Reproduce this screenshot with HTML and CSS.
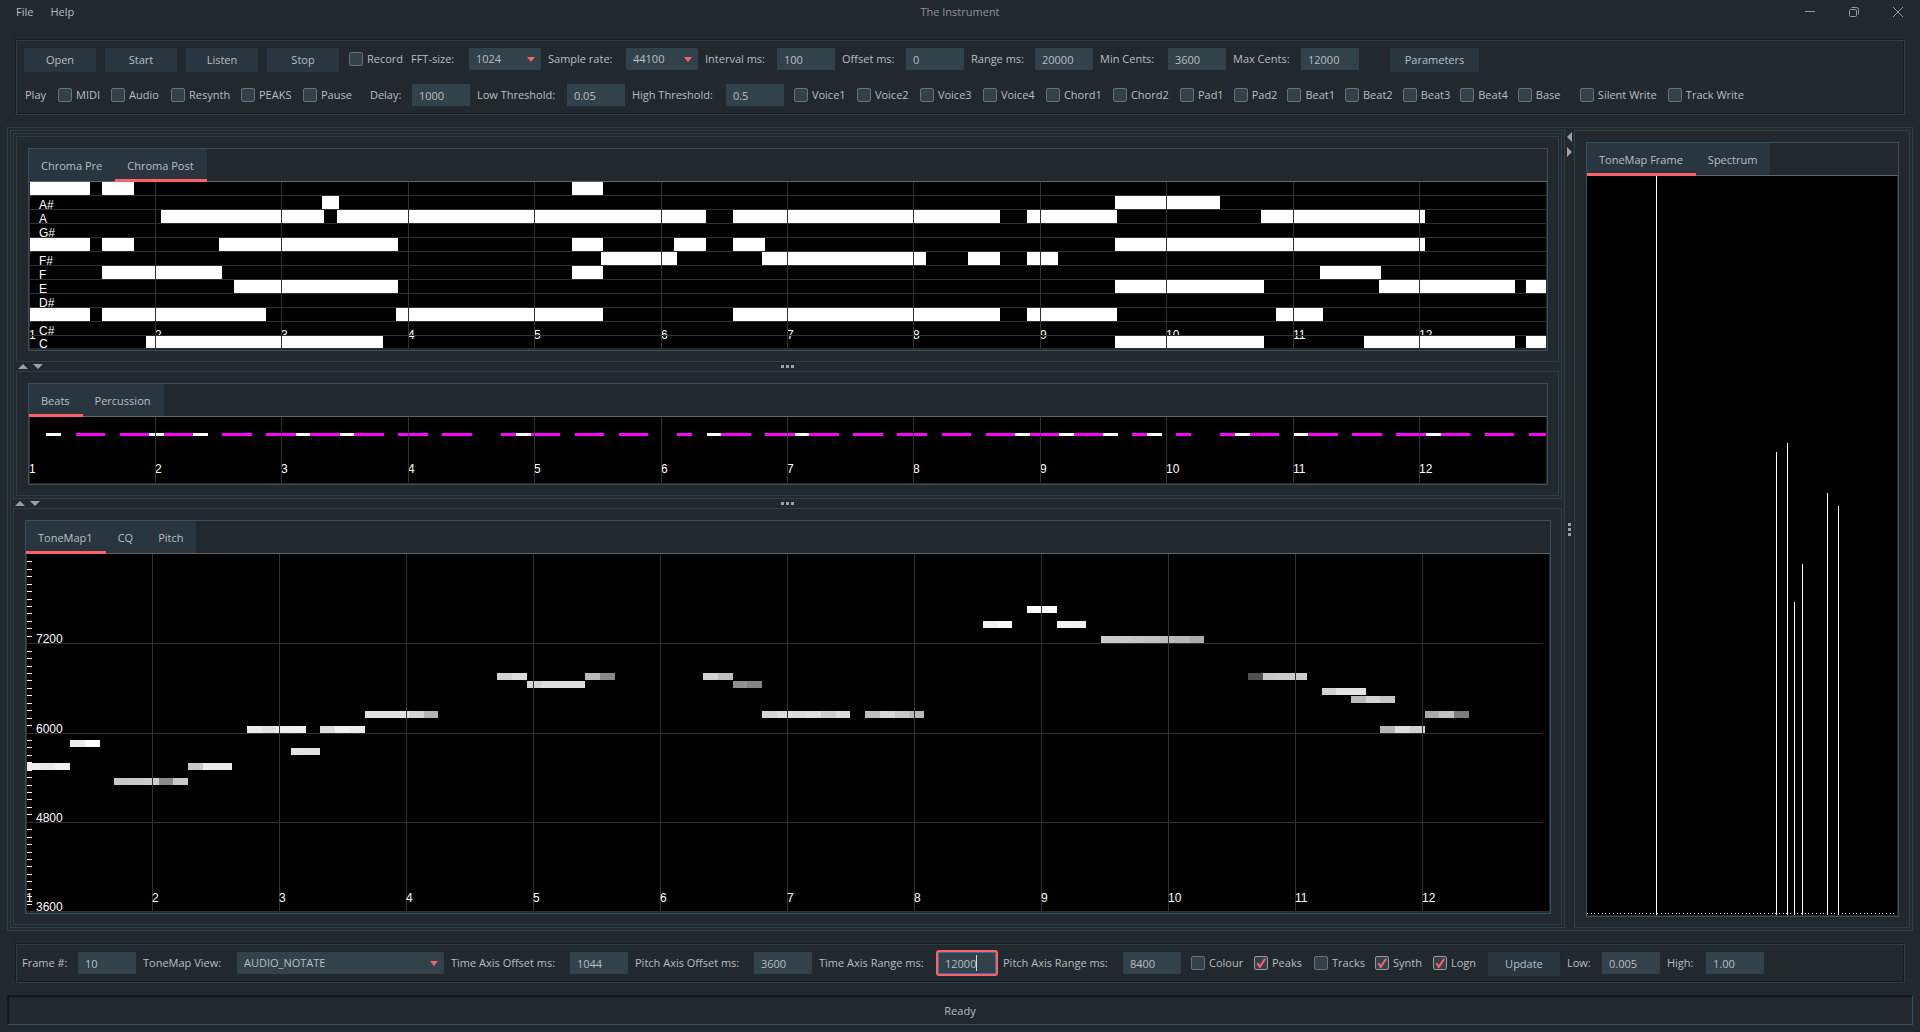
FILE: index.html
```html
<!DOCTYPE html>
<html lang="en">
<head>
<meta charset="utf-8">
<title>The Instrument</title>
<link rel="stylesheet" href="styles.css">
</head>
<body>
<header class="titlebar">
  <nav class="menu"><button type="button">File</button><button type="button">Help</button></nav>
  <h1>The Instrument</h1>
  <div class="window-buttons">
    <button type="button" aria-label="Minimize"><svg width="12" height="12" viewBox="0 0 12 12"><path d="M1 5.5H11"/></svg></button>
    <button type="button" aria-label="Restore"><svg width="12" height="12" viewBox="0 0 12 12"><rect x="1.500" y="3.500" width="7" height="7" rx="1"/><path d="M3.500 1.500H8.500Q10.500 1.500 10.500 3.500V8.500"/></svg></button>
    <button type="button" aria-label="Close"><svg width="12" height="12" viewBox="0 0 12 12"><path d="M1 1L11 11M11 1L1 11"/></svg></button>
  </div>
</header>

<form class="toolbar etched">
  <div class="row">
    <button class="btn" type="button">Open</button>
    <button class="btn" type="button">Start</button>
    <button class="btn" type="button">Listen</button>
    <button class="btn" type="button">Stop</button>
    <label class="check record"><input type="checkbox">Record</label>
    <label class="field w-130">FFT-size:<span class="select"><select><option>1024</option></select></span></label>
    <label class="field w-150">Sample rate:<span class="select"><select><option>44100</option></select></span></label>
    <label class="field w-130">Interval ms:<input type="text" value="100"></label>
    <label class="field w-122">Offset ms:<input type="text" value="0"></label>
    <label class="field w-122">Range ms:<input type="text" value="20000"></label>
    <label class="field w-126">Min Cents:<input type="text" value="3600"></label>
    <label class="field w-126">Max Cents:<input type="text" value="12000"></label>
    <button class="btn btn-params" type="button">Parameters</button>
  </div>
  <div class="row">
    <span class="caption">Play</span>
    <label class="check c-43"><input type="checkbox">MIDI</label>
    <label class="check c-50"><input type="checkbox">Audio</label>
    <label class="check c-60"><input type="checkbox">Resynth</label>
    <label class="check c-52"><input type="checkbox">PEAKS</label>
    <label class="check c-48"><input type="checkbox">Pause</label>
    <label class="field spaced w-100">Delay:<input type="text" value="1000"></label>
    <label class="field w-148">Low Threshold:<input type="text" value="0.05"></label>
    <label class="field w-152">High Threshold:<input type="text" value="0.5"></label>
    <label class="check c-53"><input type="checkbox">Voice1</label>
    <label class="check c-53"><input type="checkbox">Voice2</label>
    <label class="check c-53"><input type="checkbox">Voice3</label>
    <label class="check c-53"><input type="checkbox">Voice4</label>
    <label class="check c-57"><input type="checkbox">Chord1</label>
    <label class="check c-57"><input type="checkbox">Chord2</label>
    <label class="check c-43"><input type="checkbox">Pad1</label>
    <label class="check c-43"><input type="checkbox">Pad2</label>
    <label class="check c-47"><input type="checkbox">Beat1</label>
    <label class="check c-47"><input type="checkbox">Beat2</label>
    <label class="check c-47"><input type="checkbox">Beat3</label>
    <label class="check c-47"><input type="checkbox">Beat4</label>
    <label class="check c-43"><input type="checkbox">Base</label>
    <label class="check spaced c-78"><input type="checkbox">Silent Write</label>
    <label class="check c-78"><input type="checkbox">Track Write</label>
  </div>
</form>

<main class="frame split-h workspace">
  <div class="frame split-v left">
    <div class="frame split-v upper">
      <section class="frame pane chroma">
        <div class="tabpane">
          <div class="tabs" role="tablist">
            <button type="button" role="tab">Chroma Pre</button>
            <button type="button" role="tab" aria-selected="true">Chroma Post</button>
          </div>
          <div class="canvas"><svg id="chroma"></svg></div>
        </div>
      </section>
      <div class="divider horizontal"><i class="up"></i><i class="down"></i><b class="grip"></b></div>
      <section class="frame pane beats">
        <div class="tabpane">
          <div class="tabs" role="tablist">
            <button type="button" role="tab" aria-selected="true">Beats</button>
            <button type="button" role="tab">Percussion</button>
          </div>
          <div class="canvas"><svg id="beats"></svg></div>
        </div>
      </section>
    </div>
    <div class="divider horizontal"><i class="up"></i><i class="down"></i><b class="grip"></b></div>
    <section class="frame pane tonemap">
      <div class="tabpane">
        <div class="tabs" role="tablist">
          <button type="button" role="tab" aria-selected="true">ToneMap1</button>
          <button type="button" role="tab">CQ</button>
          <button type="button" role="tab">Pitch</button>
        </div>
        <div class="canvas"><svg id="tonemap"></svg></div>
      </div>
    </section>
  </div>
  <div class="divider vertical"><i class="back"></i><i class="forward"></i><b class="grip"></b></div>
  <section class="frame pane side">
    <div class="tabpane">
      <div class="tabs" role="tablist">
        <button type="button" role="tab" aria-selected="true">ToneMap Frame</button>
        <button type="button" role="tab">Spectrum</button>
      </div>
      <div class="canvas"><svg id="frame"></svg></div>
    </div>
  </section>
</main>

<form class="toolbar viewbar etched">
  <div class="row">
    <label class="field w-114">Frame #:<input type="text" value="10"></label>
    <label class="field w-301">ToneMap View:<span class="select wide"><select><option>AUDIO_NOTATE</option></select></span></label>
    <label class="field w-177">Time Axis Offset ms:<input type="text" value="1044"></label>
    <label class="field w-177">Pitch Axis Offset ms:<input type="text" value="3600"></label>
    <label class="field w-177">Time Axis Range ms:<span class="editing"><input type="text" value="12000"></span></label>
    <label class="field w-178">Pitch Axis Range ms:<input type="text" value="8400"></label>
    <label class="check c-53"><input type="checkbox">Colour</label>
    <label class="check c-50"><input type="checkbox" checked>Peaks</label>
    <label class="check c-50"><input type="checkbox">Tracks</label>
    <label class="check c-48"><input type="checkbox" checked>Synth</label>
    <label class="check c-47"><input type="checkbox" checked>Logn</label>
    <button class="btn btn-update" type="button">Update</button>
    <label class="field w-93">Low:<input type="text" value="0.005"></label>
    <label class="field w-97">High:<input type="text" value="1.00"></label>
  </div>
</form>

<footer class="status">Ready</footer>
<script src="charts.js"></script>
</body>
</html>
```
FILE: styles.css
```css
:root {
  --bg: #21292f;
  --line: #2f3e46;
  --pane-line: #38505c;
  --field: #31424b;
  --button: #293640;
  --text: #bbbebf;
  --accent: #ff6069;
  --shade: #151b1f;
}

* { box-sizing: border-box; }

body {
  margin: 0;
  min-height: 100vh;
  display: flex;
  flex-direction: column;
  background: var(--bg);
  color: var(--text);
  font: 11px/16px "Open Sans", "Noto Sans", sans-serif;
}

button, input, select { font: inherit; color: inherit; border: 0; margin: 0; padding: 0; border-radius: 0; outline: 0; }
button { background: none; }

.titlebar {
  height: 39px;
  padding: 2px 0 18px;
  display: grid;
  grid-template-columns: 1fr auto 1fr;
  align-items: center;
}
.titlebar h1 { margin: 0; font-size: 11px; line-height: 16px; font-weight: 400; color: #8f9293; }
.menu { display: flex; gap: 17px; padding-left: 16px; }
.window-buttons { display: flex; justify-content: flex-end; gap: 32px; padding-right: 16px; }
.window-buttons button { height: 12px; width: 12px; line-height: 0; }
.window-buttons svg { fill: none; stroke: #97999a; stroke-width: 1; }

.etched {
  border: 1px solid var(--shade);
  border-right-color: var(--line);
  border-bottom-color: var(--line);
  box-shadow: inset 1px 1px var(--line), inset -1px -1px var(--shade);
}
.toolbar {
  margin: 0 15px;
  padding: 8px 7px;
  display: flex;
  flex-direction: column;
  gap: 12px;
}
.row { display: flex; gap: 7px; height: 22px; align-items: center; white-space: nowrap; }
.row:first-child { height: 24px; }
.caption { width: 23px; margin-left: 2px; }
.viewbar { padding: 8px 6px 6px; margin-bottom: 12px; }

.btn { width: 72px; height: 24px; margin: 0 1px; background: var(--button); }
.btn-params { width: 89px; margin-left: 24px; }
.btn-update { margin-right: 0; }
.field { display: flex; align-items: center; justify-content: space-between; }
.row:first-child > .field, .row:first-child > .check { height: 22px; align-self: flex-start; }
.field input { width: 58px; height: 22px; padding: 0 7px; background: var(--field); }
.check { display: flex; align-items: center; gap: 4px; margin-left: 3px; }
.field.spaced { margin-left: 11px; }
.check.spaced { margin-left: 12px; }
.record { min-width: 56px; margin-left: 2px; margin-right: -1px; }

/* Caption plus control, by length of caption */
.w-93 { min-width: 93px; }
.w-97 { min-width: 97px; }
.w-100 { min-width: 100px; }
.w-114 { min-width: 114px; }
.w-122 { min-width: 122px; }
.w-126 { min-width: 126px; }
.w-130 { min-width: 130px; }
.w-148 { min-width: 148px; }
.w-150 { min-width: 150px; }
.w-152 { min-width: 152px; }
.w-177 { min-width: 177px; }
.w-178 { min-width: 178px; }
.w-301 { min-width: 301px; }
.c-43 { min-width: 43px; }
.c-47 { min-width: 47px; }
.c-48 { min-width: 48px; }
.c-50 { min-width: 50px; }
.c-52 { min-width: 52px; }
.c-53 { min-width: 53px; }
.c-57 { min-width: 57px; }
.c-60 { min-width: 60px; }
.c-78 { min-width: 78px; }

.check input {
  appearance: none;
  width: 14px;
  height: 14px;
  border: 1px solid #6c7072;
  border-radius: 2px;
  background: var(--field);
}
.check input:checked { border-color: #989a9b; }
.check input:checked::before {
  content: "";
  display: block;
  width: 12px;
  height: 12px;
  background: var(--accent);
  clip-path: polygon(13% 55%, 27% 47%, 40% 66%, 78% 10%, 92% 19%, 44% 92%, 36% 92%);
}

.select { position: relative; display: block; }
.select select { appearance: none; display: block; width: 72px; height: 22px; padding: 0 7px; background: var(--field); border-radius: 2px; }
.select.wide select { width: 207px; }
.select::after {
  content: "";
  position: absolute;
  right: 6px;
  top: 9px;
  border: solid transparent;
  border-width: 5px 4px 0;
  border-top-color: var(--accent);
}

.editing { position: relative; display: block; border-radius: 1px; outline: 2px solid var(--accent); }
.editing input { display: block; border: 1px solid #3d6c9c; padding: 0 6px; }
.editing::after { content: ""; position: absolute; left: 38px; top: 3px; width: 1px; height: 16px; background: #d8dadb; }

.frame { border: 1px solid var(--line); min-width: 0; min-height: 0; display: flex; }
.split-h { padding: 2px; }
.split-v { padding: 2px; flex-direction: column; }
.workspace { flex: 1; margin: 12px 7px; }
.left { flex: 1; }
.upper { flex: 366 1 366px; }
.chroma { flex: 226 1 226px; }
.beats { flex: 125 1 125px; }
.tonemap { flex: 417 1 417px; }
.side { flex: 0 0 336px; }
.pane { padding: 11px 10px 10px 11px; }
.tabpane { flex: 1; min-width: 0; display: flex; flex-direction: column; border: 1px solid var(--pane-line); }
.tabs { display: flex; flex: 0 0 33px; height: 33px; min-height: 0; border-bottom: 1px solid #636668; }
.tabs button { padding: 2px 13px 0 12px; height: 32px; background: var(--button); }
.tabs [aria-selected] { height: 33px; padding-top: 4px; border-bottom: 3px solid var(--accent); }
.canvas { flex: 1; min-height: 0; display: flex; padding: 0 1px 1px 0; }
.canvas svg { flex: 1; min-width: 0; height: 100%; background: #000; shape-rendering: crispEdges; font: 12px "Liberation Sans", Arial, sans-serif; fill: #fff; }

.divider { display: flex; align-items: center; position: relative; gap: 5px; }
.divider.horizontal { flex: 0 0 9px; padding-left: 2px; }
.divider.vertical { flex: 0 0 9px; flex-direction: column; padding-top: 2px; }
.divider i { border: solid transparent; }
.divider .up { border-width: 0 5px 5px; border-bottom-color: #9d9fa0; }
.divider .down { border-width: 5px 5px 0; border-top-color: #9d9fa0; }
.divider .back { border-width: 5px 5px 5px 0; border-right-color: #9d9fa0; }
.divider .forward { border-width: 5px 0 5px 5px; border-left-color: #9d9fa0; }
.grip { position: absolute; background: repeating-linear-gradient(90deg, #9d9fa0 0 3px, transparent 3px 5px); width: 13px; height: 3px; left: calc(50% - 7px); top: 3px; }
.vertical .grip { background: repeating-linear-gradient(#9d9fa0 0 3px, transparent 3px 5px); width: 3px; height: 13px; left: 3px; top: calc(50% - 6px); }

.status {
  height: 30px;
  margin: 0 7px 7px;
  padding-top: 2px;
  border: 1px solid var(--shade);
  border-right-color: var(--pane-line);
  border-bottom-color: var(--pane-line);
  box-shadow: inset 1px 1px #0f1417;
  display: flex;
  align-items: center;
  justify-content: center;
}
.toolbar, .status { flex: none; }
```
FILE: charts.js
```js
const NS = "http://www.w3.org/2000/svg";
const GRID = "#303030";
const SECONDS = 12;
const BEAT_FRAME = 0.1161;
const TONE_FRAME = 0.116;

// Each row: semitone row from the top, then [start, end] spans on a 1517-wide axis.
const CHROMA = {
  0: [[0, 61], [73, 105], [543, 574]],
  1: [[293, 310], [1086, 1191]],
  2: [[132, 295], [308, 677], [704, 971], [998, 1088], [1232, 1396]],
  4: [[0, 61], [73, 105], [190, 369], [543, 574], [645, 677], [704, 736], [1086, 1396]],
  5: [[572, 648], [733, 897], [939, 971], [998, 1029]],
  6: [[73, 193], [543, 574], [1291, 1352]],
  7: [[205, 369], [1086, 1235], [1350, 1486], [1497, 1517]],
  9: [[0, 61], [73, 237], [367, 574], [704, 971], [998, 1088], [1247, 1294]],
  11: [[117, 354], [1086, 1235], [1335, 1486], [1497, 1517]]
};
const NOTES = { 1: "A#", 2: "A", 3: "G#", 5: "F#", 6: "F", 7: "E", 8: "D#", 10: "C#", 11: "C" };

// One character per audio frame: b = beat, P = accent.
const BEATS = ".P.bb.bbPbbP.bb.bbPbbPbb.bb.bb..bPbb.bb.bb..b.Pbb.bbPbb.bb.bb.bb.bbPbbPbbP.bP.b..bPbb.Pbb.bb.bbPbb.bb.bb";

// [semitone above 3600, first frame, grey level of each frame]
const TONES = [
  [19, 0, [236, 232, 240]], [22, 3, [236, 253]], [17, 6, [198, 202, 204, 140, 202]],
  [19, 11, [200, 235, 235]], [24, 15, [236, 226, 238, 240]], [21, 18, [228, 226]],
  [24, 20, [221, 241, 236]], [26, 23, [226, 226, 226, 212, 180]],
  [31, 32, [210, 220]], [30, 34, [212, 222, 222, 222]], [31, 38, [184, 136]],
  [31, 46, [210, 190]], [30, 48, [144, 132]], [26, 50, [212, 222, 218, 222, 204, 218]],
  [26, 57, [190, 214, 200, 186]], [38, 65, [243, 248]], [40, 68, [255, 250]],
  [38, 70, [243, 241]], [36, 73, [203, 201, 197, 195, 188, 184, 172]],
  [31, 83, [80, 200, 202, 204]], [29, 88, [210, 228, 228]], [28, 90, [186, 212, 198]],
  [24, 92, [180, 222, 208]], [26, 95, [168, 192, 124]]
];

// [position across the plot, height] as fractions
const PEAKS = [[0.2226, 1], [0.6097, 0.6265], [0.6452, 0.6387], [0.6677, 0.4235], [0.6935, 0.475], [0.7742, 0.571], [0.8097, 0.5534]];

function add(svg, tag, attrs, text) {
  const el = document.createElementNS(NS, tag);
  for (const k in attrs) el.setAttribute(k, attrs[k]);
  if (text) el.textContent = text;
  svg.appendChild(el);
}
function rect(svg, x, y, w, h, fill) {
  add(svg, "rect", { x: x, y: y, width: w, height: h, fill: fill });
}
function open(id) {
  const svg = document.getElementById(id);
  svg.replaceChildren();
  const box = svg.getBoundingClientRect();
  return [svg, Math.round(box.width), Math.round(box.height)];
}
function seconds(svg, w, h, baseline) {
  for (let k = 0; k < SECONDS; k++) {
    add(svg, "text", { x: Math.floor(k * w / SECONDS), y: baseline }, String(k + 1));
  }
}
function columns(svg, w, h) {
  for (let k = 0; k < SECONDS; k++) rect(svg, Math.floor(k * w / SECONDS), 0, 1, h, GRID);
}

function drawChroma() {
  const [svg, w, h] = open("chroma");
  const row = Math.round(h / 12);
  seconds(svg, w, h, h - 10);
  for (const r in NOTES) add(svg, "text", { x: 10, y: Math.min(row * r + 13, h - 1) }, NOTES[r]);
  for (const r in CHROMA) {
    for (const [a, b] of CHROMA[r]) {
      const x = Math.round(a * w / 1517);
      rect(svg, x, row * r, Math.round(b * w / 1517) - x, row - 1, "#fff");
    }
  }
  for (let r = 1; r < 12; r++) rect(svg, 0, row * r - 1, w, 1, GRID);
  rect(svg, 0, h - 1, w, 1, GRID);
  columns(svg, w, h);
}

function drawBeats() {
  const [svg, w, h] = open("beats");
  const at = i => Math.round((i * BEAT_FRAME + 0.02) * w / SECONDS);
  seconds(svg, w, h, h - 10);
  [...BEATS].forEach((c, i) => {
    if (c !== ".") rect(svg, at(i), 16, at(i + 1) - at(i), 3, c === "b" ? "#f0f" : "#fff");
  });
  columns(svg, w, h);
}

function drawTonemap() {
  const [svg, w, h] = open("tonemap");
  const semitone = n => Math.round((h - 1) * (1 - n / 48));
  const at = i => Math.round(i * TONE_FRAME * w / SECONDS);
  for (let n = 1; n < 48; n++) rect(svg, 1, semitone(n), 5, 1, "#fff");
  for (const [n, start, levels] of TONES) {
    levels.forEach((v, i) => {
      const x = at(start + i);
      rect(svg, x, semitone(n) - 7, at(start + i + 1) - x, 7, `rgb(${v},${v},${v})`);
    });
  }
  for (let n = 0; n < 48; n += 12) rect(svg, 0, semitone(n), n ? w - 6 : w, 1, GRID);
  columns(svg, w, h);
  seconds(svg, w, h, h - 10);
  for (let n = 0; n < 48; n += 12) add(svg, "text", { x: 10, y: semitone(n) }, String(3600 + n * 100));
}

function drawFrame() {
  const [svg, w, h] = open("frame");
  for (let n = 0; n < 84; n++) rect(svg, Math.round(n * w / 84), h - 2, 1, 1, "#fff");
  for (const [x, v] of PEAKS) {
    rect(svg, Math.round(x * w), Math.round(h * (1 - v)), 1, Math.round(h * v), "#fff");
  }
}

function draw() {
  drawChroma();
  drawBeats();
  drawTonemap();
  drawFrame();
}
draw();
window.addEventListener("resize", draw);
```
